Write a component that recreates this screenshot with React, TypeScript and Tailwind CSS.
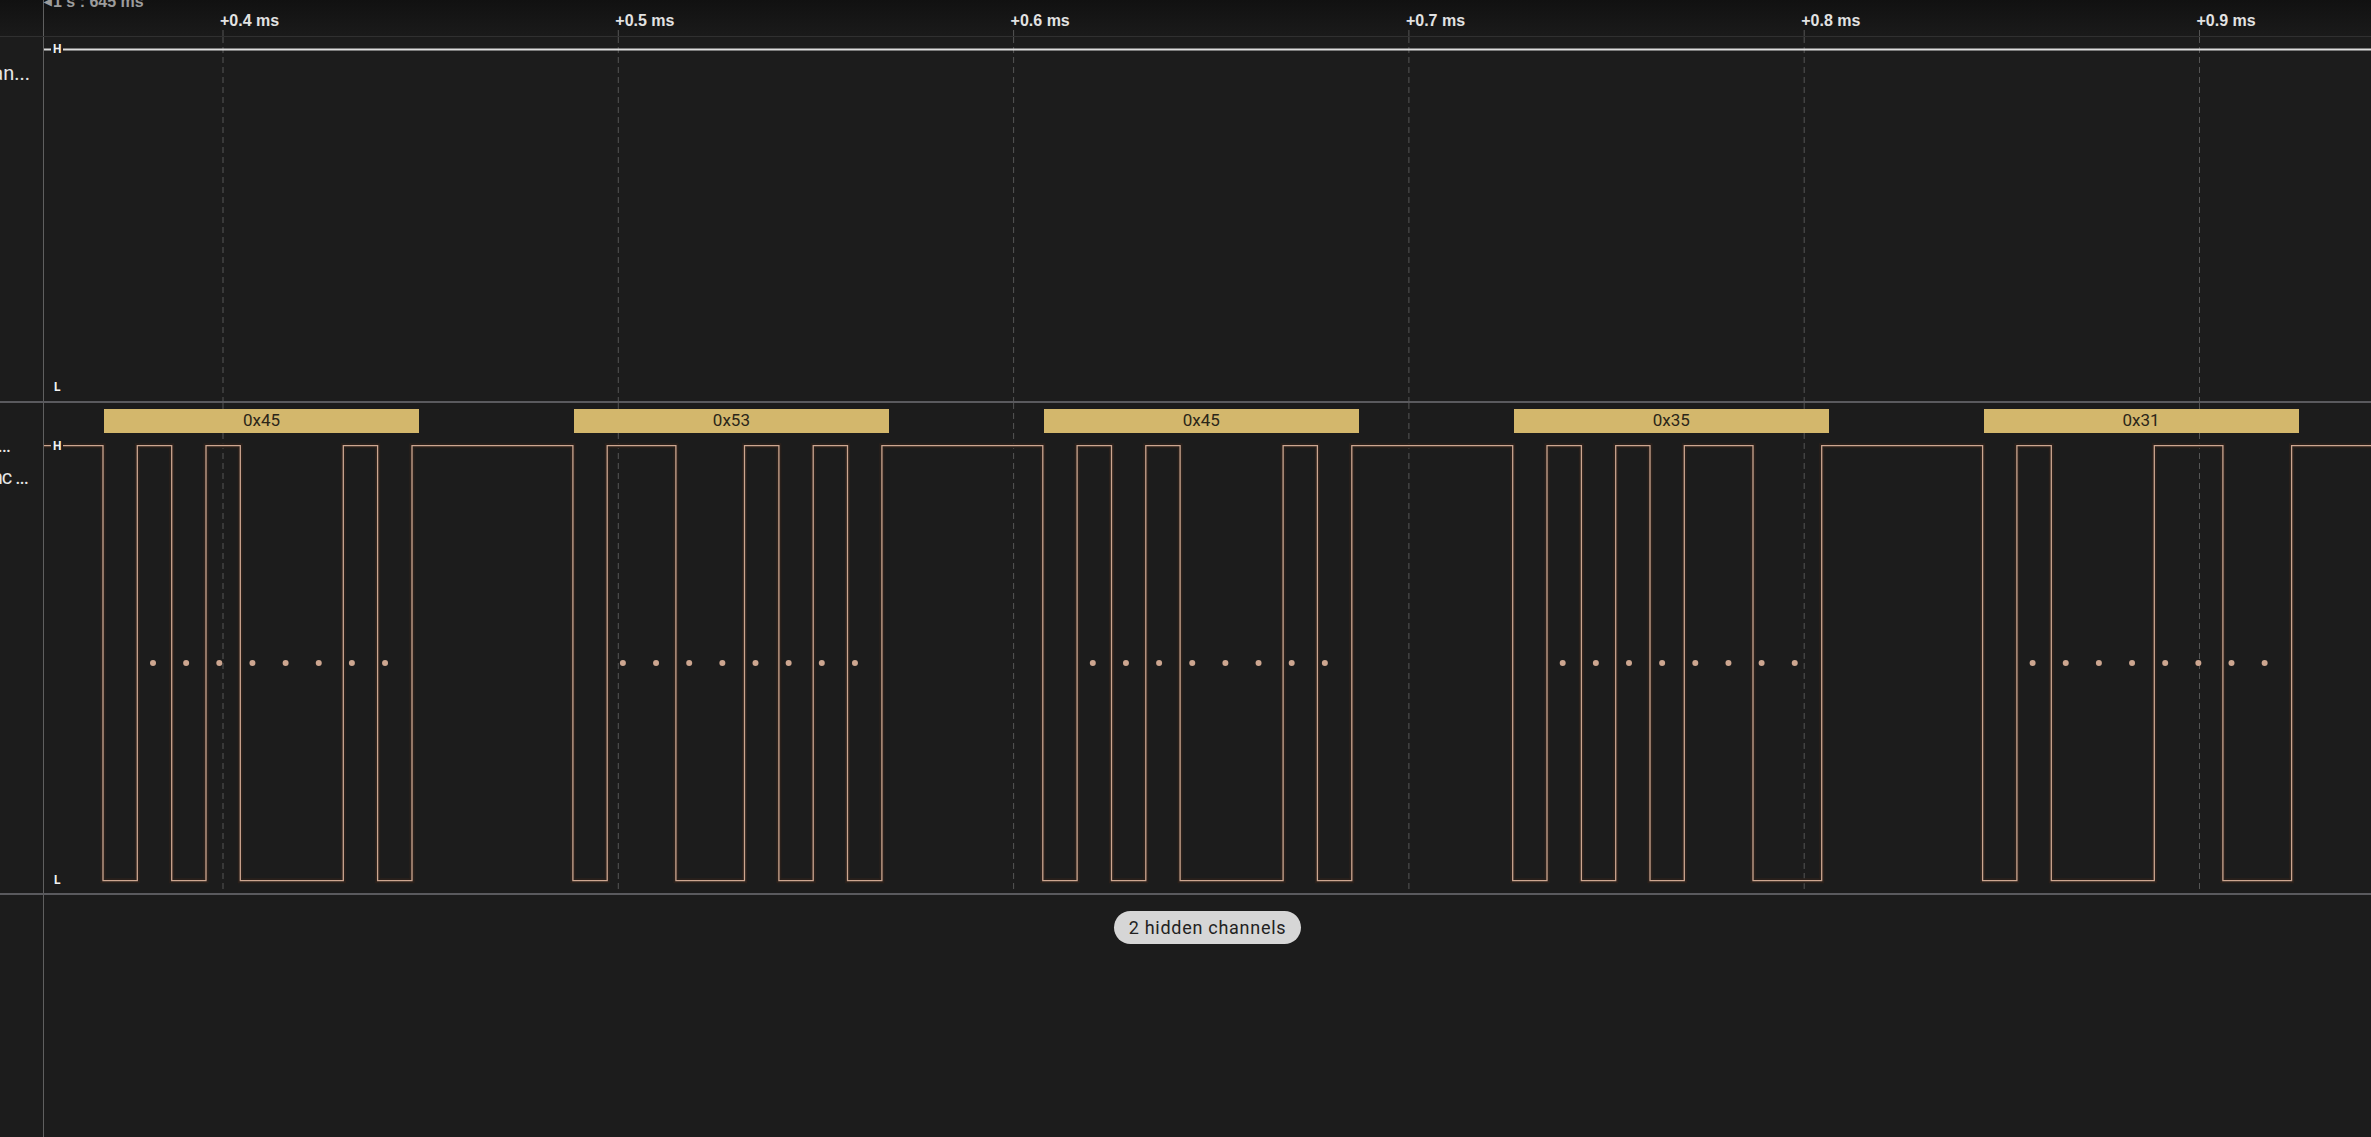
// Logic analyzer view: two channels, async serial decode
const BYTES = [0x45, 0x53, 0x45, 0x35, 0x31];
const BIT_W = 34.33;
const BYTE_X0 = 59;
const BYTE_STEP = 469.9;
const DOT_OFF = 50;
const DOT_STEP = 33.15;
const GRID_X0 = 179;
const GRID_STEP = 395.3;
const TIMES = ["+0.4 ms", "+0.5 ms", "+0.6 ms", "+0.7 ms", "+0.8 ms", "+0.9 ms"];
const WAVE = "#cda690";
const BAR = "#d3b76c";

const gridXs = TIMES.map((_, i) => GRID_X0 + GRID_STEP * i);

function wavePath(yH: number, yL: number, end: number) {
  let d = `M 0 ${yH}`;
  let cur = 1;
  BYTES.forEach((b, i) => {
    const x0 = BYTE_X0 + BYTE_STEP * i;
    for (let k = 0; k <= 9; k++) {
      const lvl = k === 0 ? 0 : k <= 8 ? (b >> (k - 1)) & 1 : 1;
      if (lvl !== cur) {
        const x = (x0 + k * BIT_W).toFixed(1);
        d += ` L ${x} ${cur ? yH : yL} L ${x} ${lvl ? yH : yL}`;
        cur = lvl;
      }
    }
  });
  d += ` L ${end} ${yH}`;
  return d;
}

function Grid({ h }: { h: number }) {
  return (
    <>
      {gridXs.map((x) => (
        <line key={x} x1={x} x2={x} y1={0} y2={h} stroke="#545454" strokeWidth={1} strokeDasharray="6 4" />
      ))}
    </>
  );
}

function Level({ children, className }: { children: string; className: string }) {
  return (
    <span className={`absolute bg-[#1c1c1c] px-[2px] text-[12px] leading-[12px] font-bold text-[#f2f2f2] ${className}`}>
      {children}
    </span>
  );
}

function SideLabel({ text, pr }: { text: string; pr: string }) {
  return (
    <div className={`flex justify-end overflow-hidden whitespace-pre text-[20px] leading-[32px] text-[#e6e6e6] ${pr}`}>
      {text}
    </div>
  );
}

export default function App() {
  const W = 2327;
  const wave = wavePath(42.7, 477.7, W);
  return (
    <div
      className="flex h-[1137px] w-[2371px] flex-col overflow-hidden bg-[#1c1c1c]"
      style={{ fontFamily: "Roboto, 'Liberation Sans', sans-serif" }}
    >
      {/* ruler */}
      <div className="flex h-[37px] border-b border-[#303030] bg-gradient-to-b from-[#111111] to-[#1a1a1a]">
        <div className="w-[44px] shrink-0 border-r border-[#5f5f5f]" />
        <div className="relative flex-1" style={{ fontFamily: "'Liberation Sans', Arial, sans-serif" }}>
          <div className="absolute left-0 top-[-6px] flex items-center whitespace-nowrap text-[16px] font-bold leading-[16px] text-[#9c9c9c]">
            <span className="mr-[1px] text-[10px]">◀</span>1 s : 645 ms
          </div>
          {TIMES.map((t, i) => (
            <div
              key={t}
              className="absolute top-[13px] whitespace-nowrap text-[16px] font-bold leading-[16px] text-[#e2e2e2]"
              style={{ left: gridXs[i] - 3 }}
            >
              {t}
            </div>
          ))}
          <svg className="absolute left-0 top-0 h-full w-full">
            {gridXs.map((x) => (
              <line key={x} x1={x} x2={x} y1={30} y2={37} stroke="#545454" strokeWidth={1} strokeDasharray="6 4" />
            ))}
          </svg>
        </div>
      </div>

      {/* channel 1 */}
      <div className="flex h-[366px] border-b-2 border-[#5a5a5e]">
        <div className="w-[44px] shrink-0 border-r border-[#5f5f5f] pt-[20px]">
          <SideLabel text="Chan..." pr="pr-[13px]" />
        </div>
        <div className="relative flex-1">
          <svg className="absolute inset-0 h-full w-full">
            <Grid h={364} />
            <line x1={0} x2={W} y1={12.5} y2={12.5} stroke="#dcdcdc" strokeWidth={2} />
          </svg>
          <Level className="left-[7px] top-[6px]">H</Level>
          <Level className="left-[8px] top-[344px]">L</Level>
        </div>
      </div>

      {/* channel 2 */}
      <div className="flex h-[492px] border-b-2 border-[#5a5a5e]">
        <div className="w-[44px] shrink-0 border-r border-[#5f5f5f] pt-[26px]">
          <SideLabel text="Channel 1 …" pr="pr-[32px]" />
          <SideLabel text="Async ..." pr="pr-[15px] tracking-[-1px]" />
        </div>
        <div className="relative flex-1">
          <svg className="absolute inset-0 h-full w-full">
            <Grid h={490} />
            <path d={wave} fill="none" stroke="#2a201b" strokeWidth={5} />
            <path d={wave} fill="none" stroke={WAVE} strokeWidth={1.3} />
            {BYTES.map((_, i) =>
              Array.from({ length: 8 }, (_, k) => (
                <circle
                  key={`${i}-${k}`}
                  cx={BYTE_X0 + BYTE_STEP * i + DOT_OFF + k * DOT_STEP}
                  cy={260}
                  r={3}
                  fill={WAVE}
                />
              ))
            )}
          </svg>
          {BYTES.map((b, i) => (
            <div
              key={i}
              className="absolute top-[6px] flex h-[24px] w-[315px] items-center justify-center text-[17px] text-[#2b2618]"
              style={{ left: BYTE_X0 + 1 + BYTE_STEP * i, background: BAR }}
            >
              0x{b.toString(16).toUpperCase().padStart(2, "0")}
            </div>
          ))}
          <Level className="left-[7px] top-[37px]">H</Level>
          <Level className="left-[8px] top-[471px]">L</Level>
        </div>
      </div>

      {/* hidden channels */}
      <div className="flex flex-1">
        <div className="w-[44px] shrink-0 border-r border-[#5f5f5f]" />
        <div className="flex flex-1 justify-center pt-[16px]">
          <div className="flex h-[33px] items-center rounded-full bg-[#d6d6d6] px-[15px] text-[18px] tracking-[0.04em] text-[#222222]">
            2 hidden channels
          </div>
        </div>
      </div>
    </div>
  );
}
